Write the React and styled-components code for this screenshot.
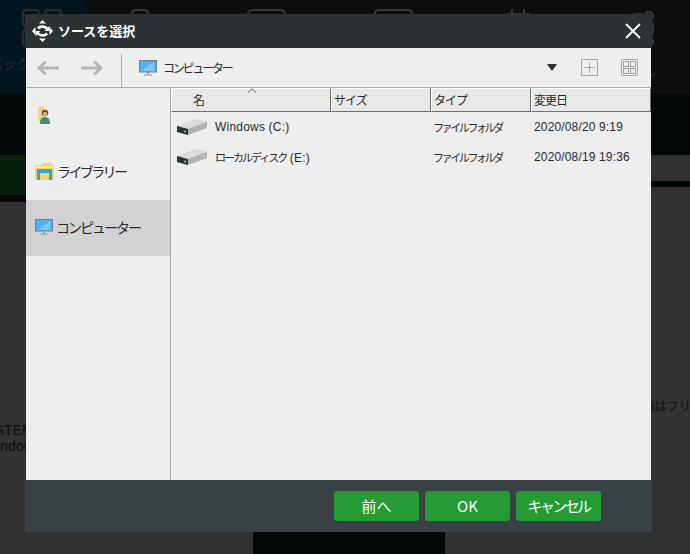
import React from "react";
import styled, { createGlobalStyle } from "styled-components";

const Global = createGlobalStyle`
  html, body { margin: 0; padding: 0; background: #323232; }
  * { box-sizing: border-box; }
  body { font-family: "Noto Sans CJK JP", "Liberation Sans", sans-serif; }
`;

const Page = styled.div`
  position: relative;
  width: 690px;
  height: 554px;
  overflow: hidden;
  display: flex;
  flex-direction: column;
  background: #323232;
`;

const TopBar = styled.div`
  height: 94px;
  display: flex;
  background: #0c0e0e;
`;
const ActiveTab = styled.div`
  width: 85px;
  margin-right: -9px;
  background: #02151f;
  display: flex;
  flex-direction: column;
  align-items: center;
  padding-top: 9px;
`;
const NavItem = styled.div`
  width: ${(p) => p.$w}px;
  flex: none;
  display: flex;
  flex-direction: column;
  align-items: center;
  padding-top: 9px;
`;
const NavLabel = styled.div`
  color: #2c3033;
  font-size: 14px;
  line-height: 20px;
  white-space: nowrap;
  margin-top: ${(p) => p.$top || 10}px;
  margin-right: ${(p) => p.$shift || 0}px;
`;

const DarkBand = styled.div`
  height: 61px;
  background: #020708;
`;
const StripRow = styled.div`
  height: 47px;
  display: flex;
`;
const StripLeft = styled.div`
  width: 345px;
  background: #020708;
`;
const GreenBar = styled.div`
  height: 40px;
  background: #07200e;
`;
const StripRight = styled.div`
  flex: 1;
  padding-top: 26px;
`;
const DarkLine = styled.div`
  height: 6px;
  background: #020708;
`;

const Content = styled.div`
  flex: 1;
  display: flex;
  justify-content: space-between;
  padding-top: 196px;
`;
const LeftNotes = styled.div`
  padding-top: 24px;
  color: #0d0d0d;
  font-family: "Liberation Sans", sans-serif;
  font-size: 14px;
  line-height: 16px;
`;
const NoteLine = styled.div`
  margin-left: ${(p) => p.$offset}px;
`;
const RightNote = styled.div`
  margin-right: -30px;
  width: 72px;
  color: #0d0d0d;
  font-size: 12px;
  line-height: 16px;
  white-space: nowrap;
`;
const BottomRow = styled.div`
  height: 22px;
  padding-left: 253px;
`;
const BottomBlock = styled.div`
  width: 192px;
  height: 22px;
  background: #020708;
`;

const Dialog = styled.div`
  position: absolute;
  left: 25px;
  top: 14px;
  width: 627px;
  height: 518px;
  display: flex;
  flex-direction: column;
`;
const TitleBar = styled.div`
  height: 34px;
  flex: none;
  background: #2c3134;
  display: flex;
  align-items: center;
  padding: 0 11px 0 7px;
  border-radius: 0 3px 0 0;
`;
const Title = styled.div`
  flex: 1;
  margin-left: 5px;
  color: #fff;
  font-size: 13px;
  font-weight: 700;
  line-height: 34px;
`;
const Body = styled.div`
  flex: 1;
  margin: 0 1px;
  background: #eeeeee;
  display: flex;
  flex-direction: column;
  min-height: 0;
`;
const Toolbar = styled.div`
  height: 40px;
  flex: none;
  display: flex;
  align-items: center;
  border-bottom: 1px solid #ababab;
  padding: 0 13px 0 10px;
`;
const Arrows = styled.div`
  display: flex;
  gap: 22px;
  width: 86px;
  height: 33px;
  align-self: flex-end;
  align-items: center;
  padding-bottom: 5px;
  border-right: 1px solid #b0b0b0;
`;
const PathBar = styled.div`
  flex: 1;
  display: flex;
  align-items: center;
  gap: 6px;
  padding-left: 17px;
  color: #2a2a2a;
  font-size: 12px;
  letter-spacing: -2.2px;
`;
const ToolButtons = styled.div`
  display: flex;
  align-items: center;
`;
const Caret = styled.div`
  width: 0;
  height: 0;
  border-left: 5px solid transparent;
  border-right: 5px solid transparent;
  border-top: 7px solid #2c3134;
  margin-right: 24px;
`;
const ToolBox = styled.div`
  width: 17px;
  height: 17px;
  border: 1px solid #a8a8a8;
  margin-left: ${(p) => p.$gap || 0}px;
  display: flex;
  align-items: center;
  justify-content: center;
`;

const Main = styled.div`
  flex: 1;
  display: flex;
  min-height: 0;
`;
const Sidebar = styled.div`
  width: 145px;
  flex: none;
  border-right: 1px solid #a8a8a8;
`;
const SideItem = styled.div`
  height: 56px;
  display: flex;
  align-items: center;
  gap: 3px;
  padding: 0 0 2px 9px;
  color: #2a2a2a;
  font-size: 14px;
  letter-spacing: ${(p) => (p.$tight ? -2.6 : -2)}px;
  background: ${(p) => (p.$active ? "#d2d2d2" : "transparent")};
`;
const FileArea = styled.div`
  flex: 1;
  min-width: 0;
`;
const Header = styled.div`
  position: relative;
  display: grid;
  grid-template-columns: 160px 100px 100px 120px;
  height: 23px;
  margin-bottom: 1px;
`;
const HeadCell = styled.div`
  background: #e8e8e8;
  border-top: 1px solid #fff;
  border-left: 1px solid #fff;
  border-right: 1px solid #6f6f6f;
  border-bottom: 1px solid #6f6f6f;
  color: #2a2a2a;
  font-size: 12px;
  line-height: 22px;
  letter-spacing: ${(p) => (p.$center ? 0 : -1)}px;
  padding-left: ${(p) => (p.$center ? 21 : 2)}px;
`;
const SortMark = styled.svg`
  position: absolute;
  left: 76px;
  top: 0;
`;
const FileRow = styled.div`
  height: 30px;
  display: grid;
  grid-template-columns: 262px 101px 1fr;
  align-items: center;
  font-size: 11px;
  color: #2a2a2a;
`;
const NameCell = styled.div`
  display: flex;
  align-items: center;
  gap: 8px;
  padding-left: 6px;
  font-family: "Liberation Sans", sans-serif;
  font-size: 12px;
  letter-spacing: 0.2px;
  white-space: pre;
`;
const CjkName = styled.span`
  font-family: "Noto Sans CJK JP", sans-serif;
  font-size: 11px;
  letter-spacing: -2px;
`;
const TypeCell = styled.div`
  letter-spacing: -2.4px;
`;
const DateCell = styled.div`
  font-family: "Liberation Sans", sans-serif;
  font-size: 12px;
  letter-spacing: 0.15px;
`;

const Footer = styled.div`
  height: 52px;
  flex: none;
  background: #394145;
  display: flex;
  justify-content: flex-end;
  align-items: center;
  gap: 6px;
  padding-right: 51px;
`;
const Button = styled.div`
  width: 85px;
  height: 30px;
  border-radius: 3px;
  background: #259b35;
  color: #fff;
  font-size: 15px;
  line-height: 30px;
  text-align: center;
  letter-spacing: ${(p) => (p.$tight ? -2.6 : 0)}px;
`;

const Squares = () => (
  <svg width="44" height="38" viewBox="0 0 44 38" fill="none" stroke="#262c30" strokeWidth="2.5">
    <rect x="2" y="1" width="16" height="16" rx="3" />
    <rect x="24" y="1" width="16" height="16" rx="3" />
    <rect x="2" y="21" width="16" height="16" rx="3" />
    <rect x="24" y="21" width="16" height="16" rx="3" />
  </svg>
);

const GhostRect = ({ w }) => (
  <svg width={w} height="30" viewBox={`0 0 ${w} 30`} fill="none" stroke="#33383b" strokeWidth="2">
    <rect x="1" y="1" width={w - 2} height="28" rx="4" />
  </svg>
);

const GhostCalendar = () => (
  <svg width="28" height="30" viewBox="0 0 28 30" fill="none" stroke="#33383b" strokeWidth="2">
    <rect x="1" y="5" width="26" height="24" rx="3" />
    <path d="M8 0v9M20 0v9" />
  </svg>
);

const GhostGear = () => (
  <svg width="30" height="40" viewBox="0 0 30 40" fill="none" stroke="#33383b" strokeWidth="2.5">
    <circle cx="13" cy="20" r="15" />
    <circle cx="24" cy="7" r="4" />
    <circle cx="25" cy="33" r="3" />
  </svg>
);

const AppLogo = () => (
  <svg width="21" height="22" viewBox="0 0 21 22" fill="#fff">
    <path d="M10.500 0l3.500 3.500H7zM10.500 22L7 18.500h7zM0 11l3.500-4v8zM21 11l-3.500-4v8z" />
    <path d="M5 7.500C7 4.800 13 4.500 15.800 7.500L17.500 6v5h-5l1.700-1.800C12 7.500 8.500 7.500 7 9.500zM16 14.500C14 17.200 8 17.500 5.200 14.500L3.500 16v-5h5l-1.700 1.800C9 14.500 12.500 14.500 14 12.500z" />
  </svg>
);

const CloseIcon = () => (
  <svg width="16" height="16" viewBox="0 0 16 16" stroke="#fff" strokeWidth="1.8">
    <path d="M1 1l14 14M15 1L1 15" />
  </svg>
);

const NavArrow = ({ flip }) => (
  <svg width="23" height="16" viewBox="0 0 23 16" fill="none" stroke="#b6b6b6" strokeWidth="3"
    style={flip ? { transform: "scaleX(-1)" } : undefined}>
    <path d="M23 8H3M10 1.500L3 8l7 6.500" />
  </svg>
);

const Monitor = () => (
  <svg width="18" height="16" viewBox="0 0 18 16">
    <rect x="0.500" y="0.500" width="17" height="11.500" fill="#4fb3f2" stroke="#6d8494" />
    <path d="M2 11L15 2v9z" fill="#7cc9f7" />
    <path d="M8 12h2v2H8z" fill="#8a9aa5" />
    <path d="M5 14.500h8v1H5z" fill="#8a9aa5" />
  </svg>
);

const UserFolder = () => (
  <svg width="18" height="19" viewBox="0 0 18 19">
    <path d="M2 1l7-1v15l-7 2z" fill="#f3d27a" />
    <path d="M2 1h2v16H2z" fill="#fbe6a6" />
    <circle cx="10" cy="7" r="3.200" fill="#6a4a36" />
    <circle cx="10" cy="8" r="2.200" fill="#d9a884" />
    <path d="M5 18c0-5 2-7 5-7s5 2 5 7z" fill="#3f8f6a" />
  </svg>
);

const LibraryFolder = () => (
  <svg width="19" height="17" viewBox="0 0 19 17">
    <path d="M0 2h7l1-2h8l1 2h2v15H0z" fill="#f6d568" />
    <path d="M1 3h17v2H1z" fill="#fbeaa8" />
    <path d="M2 6h15v11H2z" fill="#2fa6dc" />
    <path d="M5 10h9v7H5z" fill="#f6d568" />
  </svg>
);

const Disk = () => (
  <svg width="30" height="17" viewBox="0 0 30 17">
    <path d="M0 7L20 0l10 3v6L10 16 0 13z" fill="#c9c9c9" />
    <path d="M0 7l10 3L30 3 20 0z" fill="#dcdcdc" />
    <path d="M0 7l11 3v6L0 13z" fill="#2d3230" />
    <path d="M11 10l19-7v6l-19 7z" fill="#b3b3b3" />
    <rect x="7" y="11.500" width="2" height="2" fill="#3bcf62" />
  </svg>
);

const navItems = [
  { w: 127, icon: <GhostRect w={18} /> },
  { w: 127, icon: <GhostRect w={39} /> },
  { w: 127, icon: <GhostRect w={39} /> },
  { w: 122, icon: <GhostCalendar /> },
  { w: 121, icon: <GhostGear />, label: "ツール" },
];

const files = [
  { name: "Windows (C:)", date: "2020/08/20 9:19" },
  { cjk: "ローカルディスク", name: " (E:)", date: "2020/08/19 19:36" },
];

export default function App() {
  return (
    <Page>
      <Global />
      <TopBar>
        <ActiveTab>
          <Squares />
          <NavLabel $top={6} $shift={24}>バックアップ</NavLabel>
        </ActiveTab>
        {navItems.map((item, i) => (
          <NavItem key={i} $w={item.w}>
            {item.icon}
            {item.label && <NavLabel $top={12} $shift={10}>{item.label}</NavLabel>}
          </NavItem>
        ))}
      </TopBar>
      <DarkBand />
      <StripRow>
        <StripLeft>
          <GreenBar />
        </StripLeft>
        <StripRight>
          <DarkLine />
        </StripRight>
      </StripRow>
      <Content>
        <LeftNotes>
          <NoteLine $offset={-24}>SYSTEM</NoteLine>
          <NoteLine $offset={-16}>Windows</NoteLine>
        </LeftNotes>
        <RightNote>8はフリー</RightNote>
      </Content>
      <BottomRow>
        <BottomBlock />
      </BottomRow>

      <Dialog>
        <TitleBar>
          <AppLogo />
          <Title>ソースを選択</Title>
          <CloseIcon />
        </TitleBar>
        <Body>
          <Toolbar>
            <Arrows>
              <NavArrow />
              <NavArrow flip />
            </Arrows>
            <PathBar>
              <Monitor />
              コンピューター
            </PathBar>
            <ToolButtons>
              <Caret />
              <ToolBox>
                <svg width="11" height="11" viewBox="0 0 11 11" stroke="#a8a8a8">
                  <path d="M5.500 0v11M0 5.500h11" />
                </svg>
              </ToolBox>
              <ToolBox $gap={23}>
                <svg width="13" height="13" viewBox="0 0 13 13" fill="none" stroke="#a0a0a0">
                  <rect x="0.500" y="0.500" width="5" height="5" />
                  <rect x="7.500" y="0.500" width="5" height="5" />
                  <rect x="0.500" y="7.500" width="5" height="5" />
                  <rect x="7.500" y="7.500" width="5" height="5" />
                </svg>
              </ToolBox>
            </ToolButtons>
          </Toolbar>
          <Main>
            <Sidebar>
              <SideItem>
                <UserFolder />
              </SideItem>
              <SideItem $tight>
                <LibraryFolder />
                ライブラリー
              </SideItem>
              <SideItem $active>
                <Monitor />
                コンピューター
              </SideItem>
            </Sidebar>
            <FileArea>
              <Header>
                <HeadCell $center>名</HeadCell>
                <HeadCell>サイズ</HeadCell>
                <HeadCell>タイプ</HeadCell>
                <HeadCell>変更日</HeadCell>
                <SortMark width="10" height="5" viewBox="0 0 10 5" fill="none" stroke="#666">
                  <path d="M1 4.500L5 .8l4 3.700" />
                </SortMark>
              </Header>
              {files.map((f) => (
                <FileRow key={f.date}>
                  <NameCell>
                    <Disk />
                    <span>
                      {f.cjk && <CjkName>{f.cjk}</CjkName>}
                      {f.name}
                    </span>
                  </NameCell>
                  <TypeCell>ファイルフォルダ</TypeCell>
                  <DateCell>{f.date}</DateCell>
                </FileRow>
              ))}
            </FileArea>
          </Main>
        </Body>
        <Footer>
          <Button>前へ</Button>
          <Button>OK</Button>
          <Button $tight>キャンセル</Button>
        </Footer>
      </Dialog>
    </Page>
  );
}
